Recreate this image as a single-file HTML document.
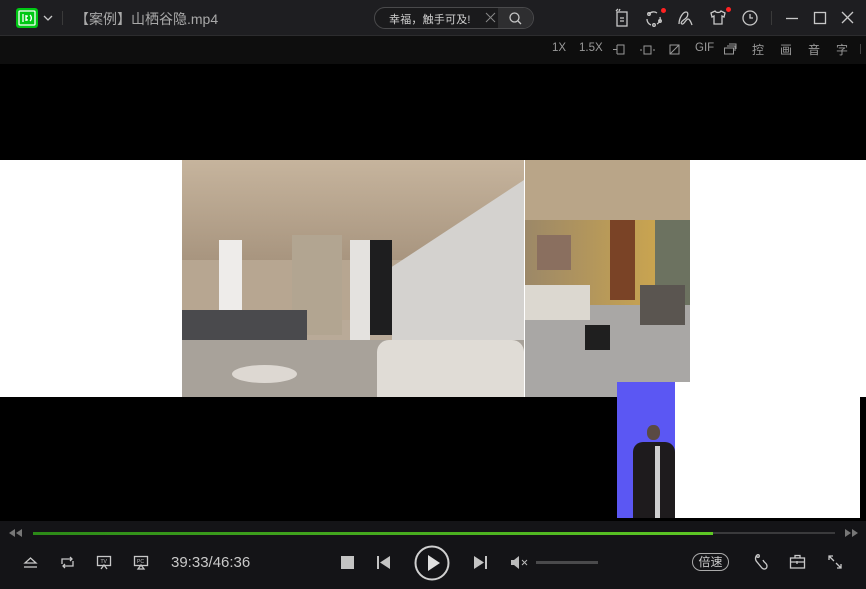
<!DOCTYPE html>
<html><head><meta charset="utf-8"><style>
*{margin:0;padding:0;box-sizing:border-box}
body{width:866px;height:589px;overflow:hidden;background:#000;font-family:"Liberation Sans","Noto Sans CJK SC",sans-serif;position:relative}
.a{position:absolute}
svg{position:absolute;overflow:visible}
.ic{stroke:#c8c8c8;fill:none;stroke-width:1.3}
.tb{color:#9a9a9a;font-size:11.5px;top:42px}
</style></head><body>
<div class="a" style="left:0;top:0;width:866px;height:35px;background:#1e1e21"></div>
<div class="a" style="left:0;top:35px;width:866px;height:1px;background:#2c2c2e"></div>
<div class="a" style="left:0;top:36px;width:866px;height:28px;background:#0e0e0e"></div>
<div class="a" style="left:16px;top:8px;width:22px;height:20px;background:#00c814;border-radius:3px"></div>
<svg style="left:16px;top:8px" width="22" height="20"><rect x="3" y="3" width="16" height="14" rx="1" fill="none" stroke="#fff" stroke-width="1.3"/><path d="M7 6v8M10 7v6M12 8a2 2 0 0 0 0 4M14 7a4 4 0 0 1 0 6" stroke="#fff" stroke-width="1.3" fill="none"/></svg>
<svg style="left:43px;top:15px" width="10" height="6"><path d="M1 1l4 4 4-4" class="ic" stroke="#aaa"/></svg>
<div class="a" style="left:62px;top:11px;width:1px;height:14px;background:#3a3a3a"></div>
<div class="a" style="left:75px;top:9px;color:#a9a9a9;font-size:14px">【案例】山栖谷隐.mp4</div>
<div class="a" style="left:374px;top:7px;width:160px;height:22px;border:1px solid #4a4a4c;border-radius:11px;background:#1a1a1c;overflow:hidden">
<div class="a" style="left:123px;top:0;width:37px;height:22px;background:#2e2e30"></div></div>
<div class="a" style="left:389px;top:11px;color:#d0d0d0;font-size:11px;letter-spacing:0.2px">幸福，触手可及!</div>
<svg style="left:486px;top:13px" width="9" height="9"><path d="M0 0l9 9M9 0L0 9" stroke="#888" stroke-width="1"/></svg>
<svg style="left:509px;top:12px" width="13" height="13"><circle cx="5.5" cy="5.5" r="4.5" class="ic" stroke-width="1.5"/><path d="M9 9l3 3" class="ic" stroke-width="1.5"/></svg>
<svg style="left:615px;top:9px" width="14" height="18"><rect x="2" y="3" width="10" height="14" class="ic"/><path d="M5 9h4M5 12h4M1 2l2-2M4 2l1-2" class="ic"/></svg>
<svg style="left:645px;top:9px" width="18" height="18"><path d="M4 5a6 6 0 0 1 8-1M15 8a6 6 0 0 1-3 7M6 16a6 6 0 0 1-4-6" class="ic"/><circle cx="4" cy="5" r="1.3" class="ic"/><circle cx="9" cy="16" r="1.3" class="ic"/><circle cx="15" cy="12" r="1.3" class="ic"/></svg>
<div class="a" style="left:661px;top:8px;width:5px;height:5px;border-radius:50%;background:#f22"></div>
<svg style="left:677px;top:10px" width="18" height="16"><path d="M2 14c0-6 4-12 7-12s2 5-1 7-5 4-3 5 4-5 6-5 4 6 4 6" class="ic"/></svg>
<svg style="left:710px;top:10px" width="16" height="15"><path d="M1 3l4-2c1 2 5 2 6 0l4 2-1 4-2-1v8H4V6L2 7z" class="ic"/></svg>
<div class="a" style="left:726px;top:7px;width:5px;height:5px;border-radius:50%;background:#f22"></div>
<svg style="left:742px;top:10px" width="16" height="16"><circle cx="8" cy="8" r="7" class="ic" stroke-width="1.5"/><path d="M8 4v4h3" class="ic" stroke-width="1.5"/></svg>
<div class="a" style="left:771px;top:11px;width:1px;height:14px;background:#3a3a3a"></div>
<svg style="left:786px;top:18px" width="12" height="2"><path d="M0 0.5h12" class="ic"/></svg>
<svg style="left:814px;top:12px" width="12" height="12"><rect x="0.5" y="0.5" width="11" height="11" class="ic"/></svg>
<svg style="left:842px;top:12px" width="11" height="11"><path d="M0 0l11 11M11 0L0 11" class="ic"/></svg>
<div class="a tb" style="left:552px">1X</div>
<div class="a tb" style="left:579px">1.5X</div>
<svg style="left:613px;top:44px" width="12" height="11"><path d="M0 5.5h4M4 1v9M4 1h7v9H4" stroke="#999" fill="none"/></svg>
<svg style="left:640px;top:45px" width="15" height="10"><rect x="4" y="1" width="7" height="8" stroke="#999" fill="none"/><path d="M0 5h2M13 5h2" stroke="#999"/></svg>
<svg style="left:669px;top:44px" width="11" height="11"><rect x="1" y="1" width="9" height="9" stroke="#999" fill="none"/><path d="M1 10L10 1" stroke="#999"/></svg>
<div class="a tb" style="left:695px">GIF</div>
<svg style="left:724px;top:44px" width="13" height="11"><rect x="0.5" y="4" width="9" height="6" stroke="#999" fill="none"/><path d="M3 2h8v5M5 0h7v5" stroke="#999" fill="none"/></svg>
<div class="a tb" style="left:752px;font-size:12px;top:41px">控</div>
<div class="a tb" style="left:780px;font-size:12px;top:41px">画</div>
<div class="a tb" style="left:808px;font-size:12px;top:41px">音</div>
<div class="a tb" style="left:836px;font-size:12px;top:41px">字</div>
<div class="a" style="left:860px;top:44px;width:1px;height:10px;background:#444"></div>
<div class="a" style="left:0;top:160px;width:866px;height:237px;background:#fff"></div>
<div class="a" style="left:182px;top:160px;width:342px;height:237px;overflow:hidden;background:#b9aa98">
<div class="a" style="left:0;top:0;width:342px;height:100px;background:linear-gradient(#c6b49d,#a8957f)"></div>
<div class="a" style="left:0;top:100px;width:230px;height:60px;background:#b7a691"></div>
<div class="a" style="left:37px;top:80px;width:23px;height:75px;background:#eeecea"></div>
<div class="a" style="left:110px;top:75px;width:50px;height:100px;background:#b2a591"></div>
<div class="a" style="left:168px;top:80px;width:20px;height:100px;background:#e4e2df"></div>
<div class="a" style="left:188px;top:80px;width:22px;height:95px;background:#1e1e1f"></div>
<div class="a" style="left:210px;top:20px;width:132px;height:217px;background:#d4d2cf;clip-path:polygon(0 100%,0 40%,100% 0,100% 100%)"></div>
<div class="a" style="left:0;top:150px;width:125px;height:35px;background:#4a4a4d"></div>
<div class="a" style="left:0;top:180px;width:342px;height:57px;background:#a8a29a"></div>
<div class="a" style="left:195px;top:180px;width:147px;height:57px;background:#e0dcd6;border-radius:12px 12px 0 0"></div>
<div class="a" style="left:50px;top:205px;width:65px;height:18px;background:#ddd8d2;border-radius:50%"></div>
</div>
<div class="a" style="left:524px;top:160px;width:1px;height:237px;background:#fff"></div>
<div class="a" style="left:525px;top:160px;width:165px;height:237px;overflow:hidden;background:#9a8770">
<div class="a" style="left:0;top:0;width:165px;height:60px;background:#b9a588"></div>
<div class="a" style="left:0;top:60px;width:130px;height:90px;background:linear-gradient(90deg,#9c8868,#c9a450)"></div>
<div class="a" style="left:130px;top:60px;width:35px;height:90px;background:#6c7260"></div>
<div class="a" style="left:12px;top:75px;width:34px;height:35px;background:#8a6f5f"></div>
<div class="a" style="left:85px;top:60px;width:25px;height:80px;background:#7a4326"></div>
<div class="a" style="left:0;top:145px;width:165px;height:92px;background:#a9a7a5"></div>
<div class="a" style="left:0;top:125px;width:65px;height:35px;background:#dcd8d0"></div>
<div class="a" style="left:60px;top:165px;width:25px;height:25px;background:#1f1f1f"></div>
<div class="a" style="left:115px;top:125px;width:45px;height:40px;background:#5a5550"></div>
</div>
<div class="a" style="left:617px;top:382px;width:58px;height:136px;background:#5b57f3"></div>
<div class="a" style="left:675px;top:382px;width:185px;height:136px;background:#fff"></div>
<div class="a" style="left:860px;top:397px;width:6px;height:121px;background:#000"></div>
<div class="a" style="left:647px;top:425px;width:13px;height:15px;border-radius:45%;background:#5a4a44"></div>
<div class="a" style="left:633px;top:442px;width:42px;height:76px;background:#1e1b1d;border-radius:10px 10px 0 0"></div>
<div class="a" style="left:655px;top:446px;width:5px;height:72px;background:#cfcfd0"></div>
<div class="a" style="left:0;top:521px;width:866px;height:68px;background:#141417"></div>
<svg style="left:8px;top:529px" width="14" height="8"><path d="M7 0v8L1 4zM14 0v8L8 4z" fill="#777"/></svg>
<div class="a" style="left:33px;top:532px;width:802px;height:2px;background:#3a3a3c"></div>
<div class="a" style="left:33px;top:532px;width:680px;height:3px;background:linear-gradient(90deg,#2c8a18,#5ec825)"></div>
<svg style="left:845px;top:529px" width="14" height="8"><path d="M0 0v8l6-4zM7 0v8l6-4z" fill="#777"/></svg>
<svg style="left:24px;top:557px" width="13" height="11"><path d="M1 6L6.5 1 12 6z" class="ic"/><path d="M0 10h13" class="ic"/></svg>
<svg style="left:60px;top:556px" width="15" height="13"><path d="M2 8V3h10M10 1l2 2-2 2M13 5v5H3M5 12l-2-2 2-2" class="ic"/></svg>
<svg style="left:97px;top:556px" width="14" height="13"><rect x="0.5" y="0.5" width="13" height="9" class="ic" stroke-width="1"/><path d="M4 13l3-4 3 4" class="ic" stroke-width="1"/><text x="3.5" y="7" font-size="5" fill="#c8c8c8" font-family="Liberation Sans">TV</text></svg>
<svg style="left:134px;top:556px" width="14" height="13"><rect x="0.5" y="0.5" width="13" height="9" class="ic" stroke-width="1"/><path d="M4 13l3-4 3 4z" class="ic" stroke-width="1"/><text x="3" y="7" font-size="5" fill="#c8c8c8" font-family="Liberation Sans">PC</text></svg>
<div class="a" style="left:171px;top:554px;color:#c9c9c9;font-size:15px">39:33/46:36</div>
<div class="a" style="left:341px;top:556px;width:13px;height:13px;background:#c4c4c4"></div>
<svg style="left:377px;top:556px" width="13" height="13"><path d="M1 0v13" stroke="#c4c4c4" stroke-width="2"/><path d="M13 0v13L3 6.5z" fill="#c4c4c4"/></svg>
<svg style="left:414px;top:545px" width="36" height="36"><circle cx="18" cy="18" r="16.5" fill="none" stroke="#d0d0d0" stroke-width="2"/><path d="M14 10v16l12-8z" fill="#e0e0e0"/></svg>
<svg style="left:474px;top:556px" width="13" height="13"><path d="M0 0v13l10-6.5z" fill="#c4c4c4"/><path d="M12 0v13" stroke="#c4c4c4" stroke-width="2"/></svg>
<svg style="left:511px;top:556px" width="18" height="13"><path d="M0 4h3l5-4v13l-5-4H0z" fill="#bbb"/><path d="M11 4l5 5M16 4l-5 5" stroke="#bbb" stroke-width="1"/></svg>
<div class="a" style="left:536px;top:561px;width:62px;height:3px;background:#4a4a4c"></div>
<div class="a" style="left:692px;top:553px;width:37px;height:18px;border:1px solid #aaa;border-radius:9px;color:#c8c8c8;font-size:12px;line-height:16px;text-align:center">倍速</div>
<svg style="left:754px;top:554px" width="14" height="17"><path d="M3 1c-2 2-2 5 0 7l5 6c2 2 5 1 5-2s-3-3-4-6" class="ic"/><circle cx="4" cy="2" r="1.3" class="ic"/></svg>
<svg style="left:790px;top:555px" width="15" height="14"><rect x="0.5" y="3" width="14" height="10" class="ic"/><path d="M5 3V0.5h5V3M0.5 7h14M7 6v3" class="ic"/></svg>
<svg style="left:828px;top:555px" width="14" height="14"><path d="M1 5V1h4M1 1l5 5M13 9v4H9M13 13l-5-5" class="ic"/></svg>
</body></html>
